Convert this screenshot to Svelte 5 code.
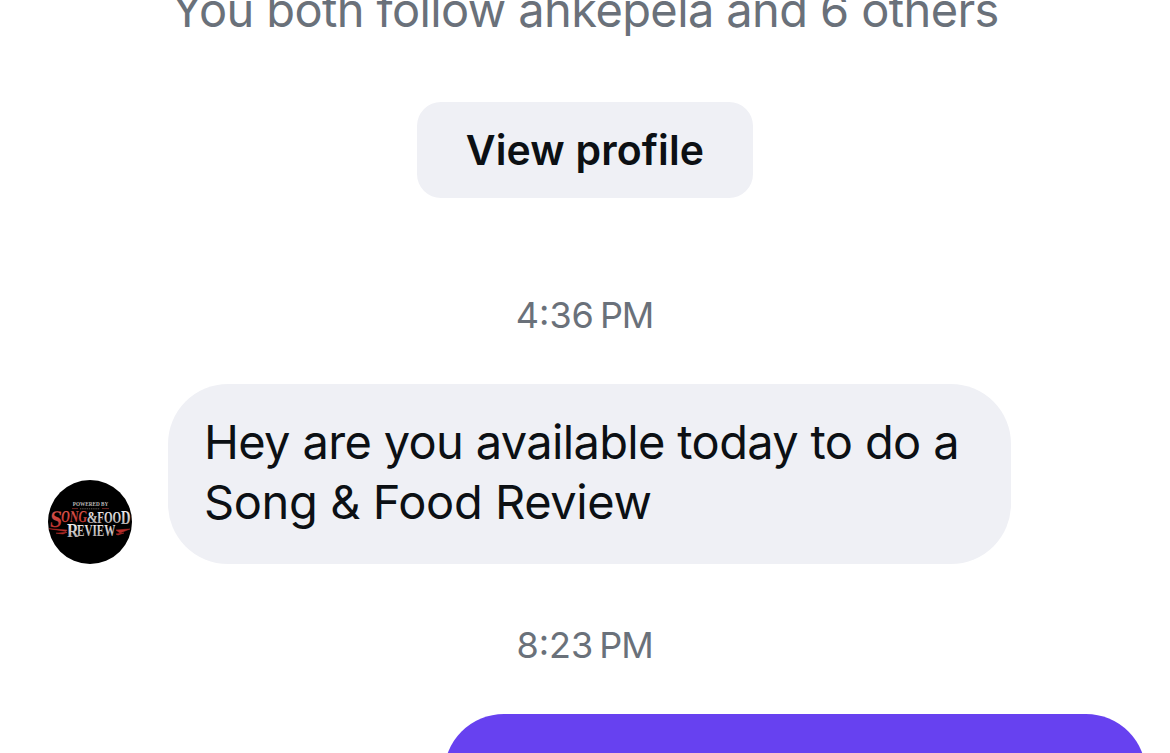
<script lang="ts">
	interface Message {
		time: string;
		period: string;
		lines: string[];
		outgoing: boolean;
	}

	const followLine = "You both follow ahkepela and 6 others";

	const messages: Message[] = [
		{
			time: "4:36",
			period: "PM",
			lines: ["Hey are you available today to do a", "Song & Food Review"],
			outgoing: false,
		},
		{ time: "8:23", period: "PM", lines: [], outgoing: true },
	];
</script>

<main class="chat">
	<header class="intro">
		<p class="follows">{followLine}</p>
		<button class="profile-button" type="button">View profile</button>
	</header>

	{#each messages as message}
		<time class="timestamp">
			<span>{message.time}</span>
			<span class="period">{message.period}</span>
		</time>
		<div class="row" class:outgoing={message.outgoing}>
			{#if !message.outgoing}
				<svg class="avatar" viewBox="0 0 84 84" aria-label="Song & Food Review">
					<defs>
						<linearGradient id="red" x1="0" y1="0" x2="0" y2="1">
							<stop offset="0.2" stop-color="#d9534a" />
							<stop offset="1" stop-color="#b02624" />
						</linearGradient>
						<linearGradient id="silver" x1="0" y1="0" x2="0" y2="1">
							<stop offset="0.2" stop-color="#eeeaea" />
							<stop offset="1" stop-color="#a09a9a" />
						</linearGradient>
					</defs>
					<circle cx="42" cy="42" r="42" fill="#000" />
					<path d="M24 28.6H30M54 28.6H61" stroke="#8a2d2a" stroke-width="0.8" />
					<path d="M32 28.8H52" stroke="#5f5552" stroke-width="1" stroke-dasharray="1.4 0.8" />
					<g class="lettering">
						<text x="24.8" y="26.2" font-size="6.8" textLength="35.5" lengthAdjust="spacingAndGlyphs" fill="#bcb8b8">POWERED BY</text>
						<g transform="skewX(-6)">
							<text x="6.2" y="47" font-size="24" textLength="12" lengthAdjust="spacingAndGlyphs" fill="url(#red)">S</text>
							<text x="17" y="42.5" font-size="16.5" textLength="26" lengthAdjust="spacingAndGlyphs" fill="url(#red)">ONG</text>
						</g>
						<text x="38.8" y="42.5" font-size="16" textLength="11" lengthAdjust="spacingAndGlyphs" fill="url(#silver)">&amp;</text>
						<text x="49.2" y="43" font-size="16.5" textLength="24" lengthAdjust="spacingAndGlyphs" fill="url(#silver)">FOO</text>
						<text x="73" y="44.2" font-size="18.5" textLength="9.5" lengthAdjust="spacingAndGlyphs" fill="url(#silver)">D</text>
						<text x="19" y="56.8" font-size="18.5" textLength="11.5" lengthAdjust="spacingAndGlyphs" fill="url(#silver)">R</text>
						<text x="29" y="55.6" font-size="16.5" textLength="38.5" lengthAdjust="spacingAndGlyphs" fill="url(#silver)">EVIEW</text>
					</g>
					<path d="M1 48.7L19 50L18 51.4ZM8 53.2L19 52.3L15 54ZM68 50L82 49L72 53ZM68 54L76 53L70 55Z" fill="#b92c29" stroke="#b92c29" stroke-width="0.5" />
				</svg>
			{/if}
			<div class="bubble">
				{#each message.lines as line}
					<span class="line">{line}</span>
				{/each}
			</div>
		</div>
	{/each}
</main>

<style>
	:global(body) {
		margin: 0;
		background: #fff;
		overflow: hidden;
	}

	.chat {
		display: flex;
		flex-direction: column;
		box-sizing: border-box;
		width: 1170px;
		height: 753px;
		overflow: hidden;
		background: #fff;
		color: #0c1014;
		font-family: Inter, "Liberation Sans", sans-serif;
	}

	.intro {
		display: flex;
		flex-direction: column;
		align-items: center;
		flex-shrink: 0;
		gap: 63px;
		margin-top: -19px;
	}

	.follows {
		margin: 0;
		color: #6a717a;
		font-size: 47px;
		line-height: 58px;
		letter-spacing: -0.61px;
		white-space: nowrap;
	}

	.profile-button {
		width: 336px;
		height: 96px;
		padding: 0;
		border: 0;
		border-radius: 24px;
		background: #eff0f5;
		color: #0c1014;
		font: 600 41px/96px Inter, "Liberation Sans", sans-serif;
		letter-spacing: 0.15px;
	}

	.timestamp {
		display: flex;
		justify-content: center;
		flex-shrink: 0;
		gap: 6px;
		margin: 95px 0 47px;
		padding-right: 1px;
		color: #6a717a;
		font-size: 36px;
		line-height: 44px;
	}

	.period {
		letter-spacing: -1.1px;
	}

	.row {
		display: flex;
		align-items: flex-end;
		flex-shrink: 0;
		gap: 36px;
		padding: 0 48px;
	}

	.row + .timestamp {
		margin-top: 59px;
	}

	.avatar {
		flex-shrink: 0;
		width: 84px;
		height: 84px;
	}

	.lettering {
		font-family: "Liberation Serif", serif;
		font-weight: 700;
	}

	.bubble {
		box-sizing: border-box;
		width: 843px;
		height: 180px;
		padding: 28px 36px 32px;
		border-radius: 60px;
		background: #eff0f5;
		font-size: 47px;
		line-height: 60px;
	}

	.line {
		display: block;
		letter-spacing: -0.66px;
		white-space: nowrap;
	}

	.line:last-child {
		letter-spacing: -0.4px;
	}

	.outgoing {
		justify-content: flex-end;
		padding-right: 24px;
	}

	.outgoing .bubble {
		width: 702px;
		background: #6741f0;
	}
</style>
